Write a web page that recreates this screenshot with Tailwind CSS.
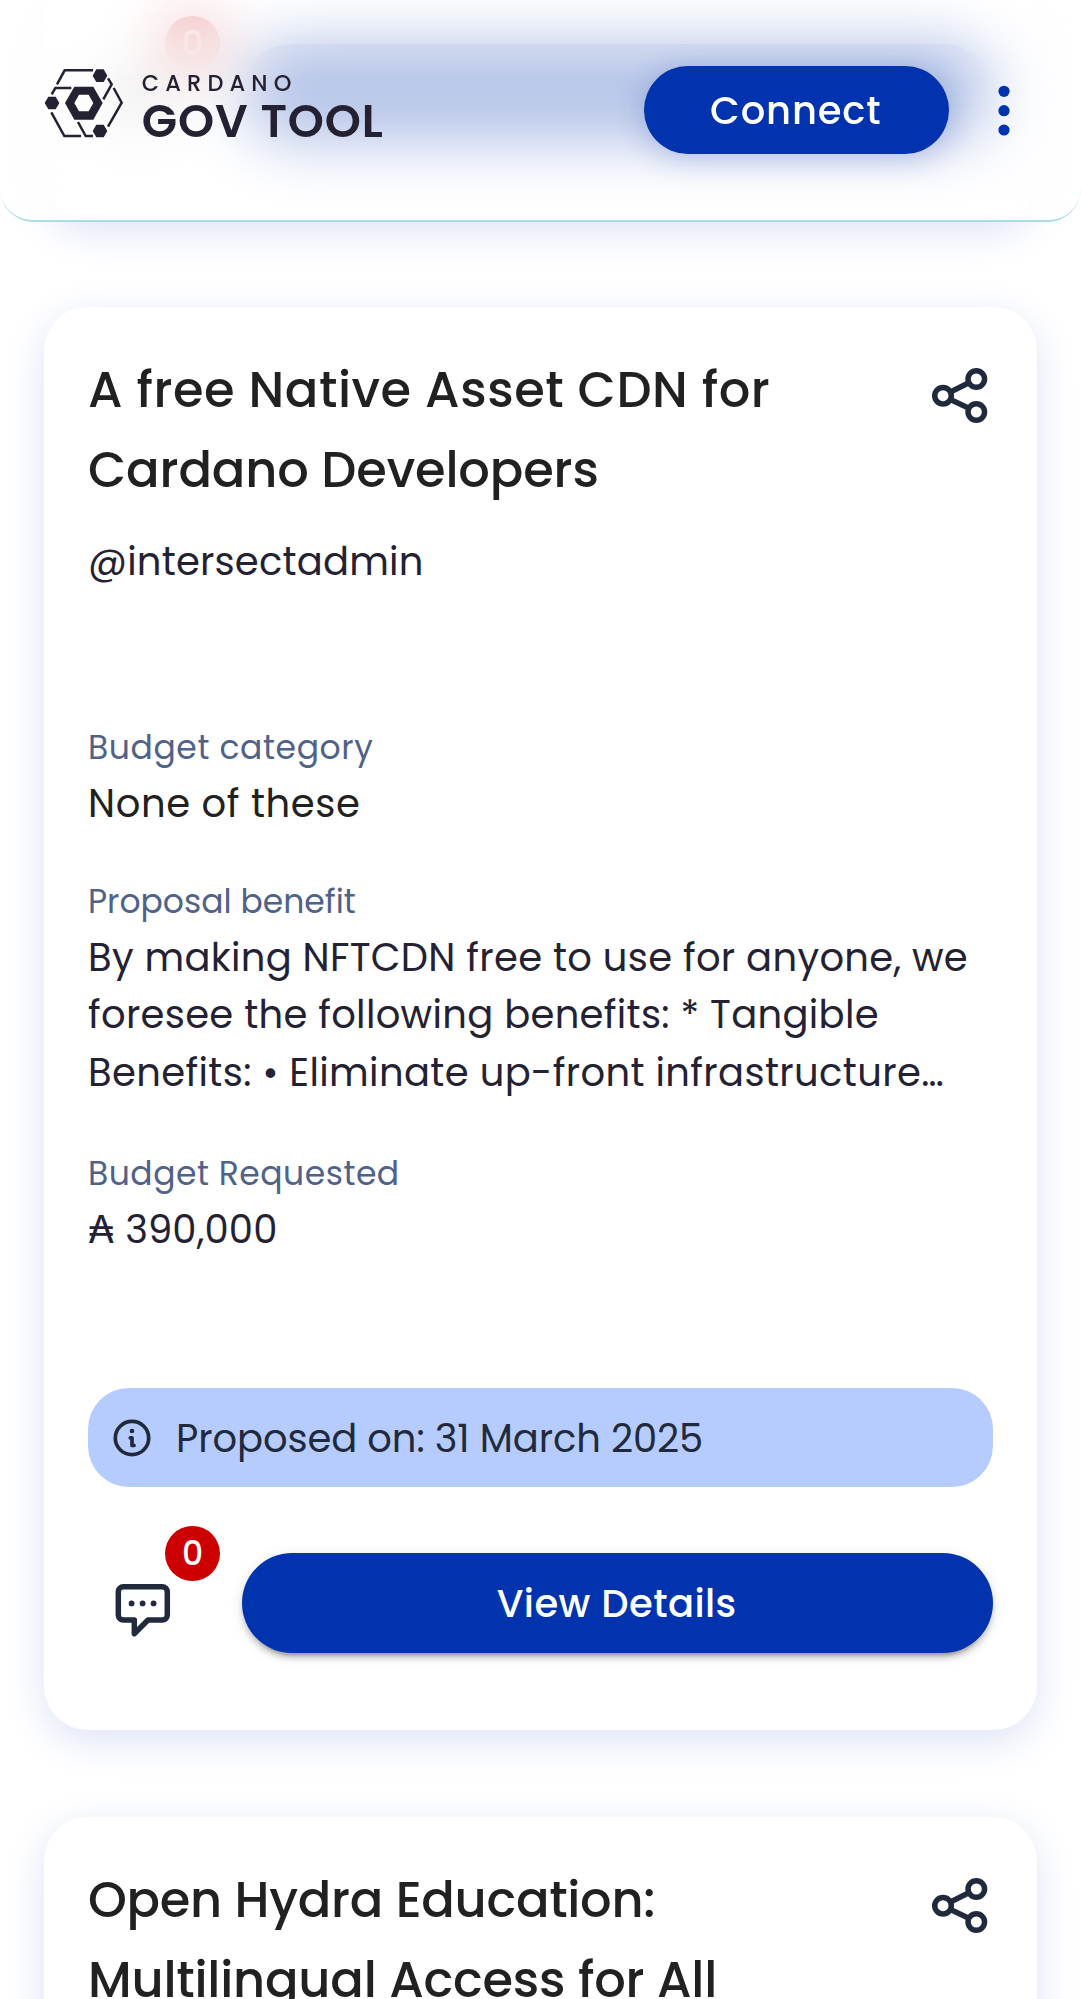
<!DOCTYPE html>
<html lang="en">
<head>
<meta charset="utf-8">
<title>Cardano GovTool</title>
<script src="https://cdn.jsdelivr.net/npm/@tailwindcss/browser@4"></script>
</head>
<body class="bg-white font-['Poppins','Inter','DejaVu_Sans',sans-serif] text-[#242232]">
<svg class="hidden">
  <symbol id="share" viewBox="0 0 56 56" fill="none" stroke="#212a3d" stroke-width="5.5">
    <circle cx="44.3" cy="11" r="8.25"/><circle cx="11" cy="27.7" r="8.25"/><circle cx="44.3" cy="44" r="8.25"/>
    <path d="M18.4 24 36.9 14.7M18.4 31.4 36.9 40.3"/>
  </symbol>
  <symbol id="chat" viewBox="0 0 56 54" fill="none" stroke="#212a3d" stroke-width="5.5" stroke-linejoin="round">
    <path d="M8.3 2.8H47.3A5 5 0 0 1 52.3 7.8V31A5 5 0 0 1 47.3 36H33L19.3 49.7V36H8.3A5 5 0 0 1 3.3 31V7.8A5 5 0 0 1 8.3 2.8Z"/>
    <g fill="#212a3d" stroke="none"><circle cx="16.6" cy="19.4" r="2.9"/><circle cx="27.6" cy="19.4" r="2.9"/><circle cx="38.6" cy="19.4" r="2.9"/></g>
  </symbol>
</svg>

<div class="relative h-[1999px] overflow-hidden">
  <header class="absolute inset-x-0 top-0 z-10 h-[222px]">
    <div class="absolute inset-0 rounded-b-[33px] border-b-[2.75px] border-[#acdbe8] bg-white/71 backdrop-blur-[31px] [mask-image:linear-gradient(rgba(0,0,0,.95),rgba(0,0,0,.97)_20%,#000_45%)]"></div>
    <div class="relative flex h-full items-start pl-[43.5px] pr-[71px] pt-[65.5px]">
      <svg class="mt-[1.3px] h-[72px] w-[81px] shrink-0" viewBox="40 50 243 216" fill="none" stroke="#242232" stroke-width="7.5">
        <path d="M79 102 102 60H187M232 84 243 102 218 147M249 113 273 157 232 229M63 132 74 113H122M62 186 101 257H151M142 215 165 257H187"/>
        <g fill="#242232" stroke="none">
          <path d="M186 76 197 57H219L230 76 219 95H197ZM186 242 197 223H219L230 242 219 261H197ZM42 158 53 139H75L86 158 75 177H53Z"/>
          <path fill-rule="evenodd" d="M103 158 131 109H188L216 158 188 208H131ZM131 158 145 183H174L188 158 174 133H145Z"/>
        </g>
      </svg>
      <div class="ml-[17.2px] mt-[4px] w-[260px] whitespace-nowrap">
        <div class="text-[22.5px] leading-[27px] font-medium tracking-[6.15px]">CARDANO</div>
        <div class="mt-[-2px] text-[46px] leading-[52px] font-semibold tracking-[0.9px]">GOV TOOL</div>
      </div>
      <button class="ml-auto h-[88.5px] w-[305.5px] rounded-full bg-[#0033ad] pr-[1px] pt-[2px] text-[38.5px] font-medium tracking-[0.85px] text-white shadow-[0_4px_30px_rgba(0,51,173,.24)]">Connect</button>
      <svg class="ml-[49px] mt-[18px] h-[53px] w-[12px]" viewBox="0 0 12 53" fill="#0033ad"><circle cx="6" cy="7.3" r="5.6"/><circle cx="6" cy="26.7" r="5.6"/><circle cx="6" cy="46" r="5.6"/></svg>
    </div>
  </header>

  <main class="flex flex-col gap-[87.7px] px-[44px]">
    <section class="h-[219.8px] shrink-0 rounded-b-[44px] bg-white px-[44px] pt-[43.6px] shadow-[0_11px_41px_#dde3f5]">
      <div class="flex">
        <div class="relative h-[99px] w-[154.3px]">
          <svg class="ml-[27px] mt-[31px] h-[54px] w-[56px]"><use href="#chat"/></svg>
          <span class="absolute left-[77px] top-[-27.3px] flex size-[55px] items-center justify-center rounded-full bg-[#cc0000] text-[33px] leading-none font-medium text-white">0</span>
        </div>
        <button class="h-[99.3px] flex-1 rounded-full bg-[#0033ad]"></button>
      </div>
    </section>

    <section class="h-[1422.3px] shrink-0 rounded-[44px] bg-white px-[44px] pt-[42.3px] shadow-[0_11px_41px_#dde3f5]">
      <div class="flex items-start justify-between">
        <h2 class="whitespace-nowrap text-[49.5px] leading-[79.75px] font-medium text-[#212121]">
          <span class="block tracking-[0.55px]">A free Native Asset CDN for</span>
          <span class="block tracking-[-0.15px]">Cardano Developers</span>
        </h2>
        <svg class="mr-[4.7px] mt-[18.3px] size-[56px]"><use href="#share"/></svg>
      </div>
      <p class="mt-[23.6px] text-[38.5px] leading-[57.4px] tracking-[0.2px]">@intersectadmin</p>
      <h3 class="mt-[132.8px] text-[33px] leading-[50px] tracking-[0.6px] text-[#506288]">Budget category</h3>
      <p class="mt-[1.5px] text-[38.5px] leading-[57.4px] tracking-[0.61px] text-[#212121]">None of these</p>
      <h3 class="mt-[45.1px] text-[33px] leading-[50px] text-[#506288]">Proposal benefit</h3>
      <p class="mt-[1.7px] whitespace-nowrap text-[38.5px] leading-[57.4px]">
        <span class="block tracking-[0.31px]">By making NFTCDN free to use for anyone, we</span>
        <span class="block tracking-[0.31px]">foresee the following benefits: * Tangible</span>
        <span class="block tracking-[0.37px]">Benefits: • Eliminate up-front infrastructure…</span>
      </p>
      <h3 class="mt-[48.1px] text-[33px] leading-[50px] tracking-[0.5px] text-[#506288]">Budget Requested</h3>
      <p class="mt-[1.7px] text-[38.5px] leading-[57.4px] tracking-[0.15px]">₳ 390,000</p>
      <div class="mt-[130px] flex h-[99.2px] items-center rounded-[41px] bg-[#b6ccff] pl-[25px] text-[38.5px] tracking-[-0.1px] text-[#212a3d]">
        <svg class="size-[38px]" viewBox="0 0 38 38" fill="none" stroke="#212a3d" stroke-width="3.7" stroke-linecap="round" stroke-linejoin="round"><circle cx="19" cy="19" r="16.7"/><path d="M17.3 18.8H19V26.4H21"/><circle cx="19" cy="12" r="2.3" fill="#212a3d" stroke="none"/></svg>
        <span class="ml-[25px] pt-[1.5px]">Proposed on: 31 March 2025</span>
      </div>
      <div class="mt-[66px] flex">
        <div class="relative h-[99px] w-[154.3px]">
          <svg class="ml-[27px] mt-[30.5px] h-[54px] w-[56px]"><use href="#chat"/></svg>
          <span class="absolute left-[77px] top-[-27.2px] flex size-[55px] items-center justify-center rounded-full bg-[#cc0000] text-[33px] leading-none font-medium text-white">0</span>
        </div>
        <button class="h-[99.3px] flex-1 rounded-full bg-[#0033ad] pr-[2px] pt-[1.5px] text-[38.5px] font-medium tracking-[0.43px] text-white shadow-[0_8px_3px_-5.5px_rgba(0,0,0,.2),0_5.5px_5.5px_rgba(0,0,0,.14),0_3px_14px_rgba(0,0,0,.12)]">View Details</button>
      </div>
    </section>

    <section class="h-[1422.3px] shrink-0 rounded-[44px] bg-white px-[44px] pt-[42.3px] shadow-[0_11px_41px_#dde3f5]">
      <div class="flex items-start justify-between">
        <h2 class="whitespace-nowrap text-[49.5px] leading-[79.75px] font-medium text-[#212121]">
          <span class="block tracking-[-0.27px]">Open Hydra Education:</span>
          <span class="block tracking-[-0.2px]">Multilingual Access for All</span>
        </h2>
        <svg class="mr-[4.7px] mt-[18.3px] size-[56px]"><use href="#share"/></svg>
      </div>
    </section>
  </main>
</div>
</body>
</html>
